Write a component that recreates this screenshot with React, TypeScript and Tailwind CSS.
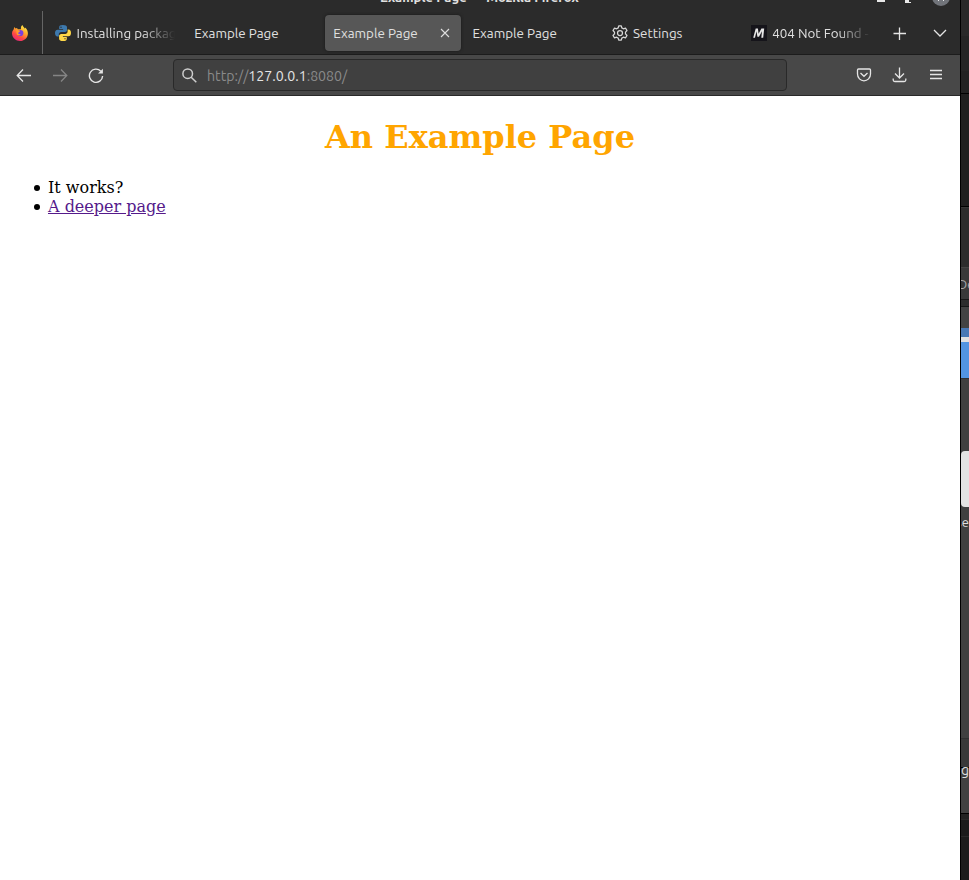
import type { ReactNode } from "react";

const uiFont = "font-['Ubuntu','Noto_Sans',sans-serif]";

function FirefoxIcon() {
  return (
    <svg width="16" height="16" viewBox="0 0 16 16">
      <defs>
        <linearGradient id="flame" x1="0.85" y1="0.05" x2="0.3" y2="1">
          <stop offset="0" stopColor="#fff04a" />
          <stop offset="0.4" stopColor="#ffa52b" />
          <stop offset="0.7" stopColor="#ff4a42" />
          <stop offset="1" stopColor="#e8267b" />
        </linearGradient>
      </defs>
      <path d="M1.6 4.4L2.3 2L3.5 3.6L5 2.9L5.8 4.2L9 4.2C8.6 2.2 9.4 .7 10.4 0C10.9 1.7 12.2 2.2 13 3.8L13.3 2.4C15.2 4.5 16 6.5 15.9 8.7C15.7 13 12.2 16 8 16S.2 12.8 0 8.5C0 6.8.6 5.6 1.6 4.4Z" fill="url(#flame)" />
      <circle cx="8.3" cy="8" r="3.1" fill="#7a3fe0" />
      <path d="M4.2 5.3C5.3 4.7 6.2 5.6 8.2 5.7C8.2 6.7 6.8 6.8 6.4 7.6C5.6 9 7.4 9.6 8.8 9C8.3 10.6 6 10.8 4.8 9.4Z" fill="#ff9b2c" />
    </svg>
  );
}

function PythonIcon() {
  return (
    <svg width="16" height="16" viewBox="0 0 16 16">
      <path d="M7.9 0C5 0 4.2 .8 4.2 2.3V4H8.1V4.7H2.6C.9 4.7 0 6 0 8C0 10 .9 11.4 2.4 11.4H3.8V9.4C3.8 8 5 7 6.3 7H10C11.2 7 12 6 12 5V2.3C12 .7 10.5 0 7.9 0Z" fill="#3d79ad" />
      <path d="M8.1 16C11 16 11.8 15.2 11.8 13.7V12H7.9V11.3H13.4C15.1 11.3 16 10 16 8C16 6 15.1 4.6 13.6 4.6H12.6V6.6C12.6 8 11.5 9 10.2 9H6.2C5 9 4.1 10 4.1 11V13.7C4.1 15.3 5.5 16 8.1 16Z" fill="#ffd848" />
      <circle cx="6" cy="2.2" r=".7" fill="#2b2b2b" />
      <circle cx="10" cy="13.8" r=".7" fill="#5a4d22" />
    </svg>
  );
}

function GearIcon() {
  return (
    <svg width="16" height="16" viewBox="0 0 16 16" fill="none" stroke="#d8d8d8" strokeWidth="1.25" strokeLinejoin="round">
      <path d="M6.7 .8H9.3L9.8 2.9L11.4 3.8L13.5 3.2L15 5.5L13.5 7.1V8.9L15 10.5L13.5 12.8L11.4 12.2L9.8 13.1L9.3 15.2H6.7L6.2 13.1L4.6 12.2L2.5 12.8L1 10.5L2.5 8.9V7.1L1 5.5L2.5 3.2L4.6 3.8L6.2 2.9Z" />
      <circle cx="8" cy="8" r="2.5" />
    </svg>
  );
}

function MdnIcon() {
  return (
    <svg width="16" height="16" viewBox="0 0 16 16">
      <rect width="16" height="16" fill="#15141a" />
      <path d="M4.7 3.5H6.9L7.6 8.8L10.4 3.5H13.2L12.2 12.7H10.3L11 6.2L8 11.8H6.4L5.5 6.2L4 12.7H2.2Z" fill="#e5e5e5" />
    </svg>
  );
}

function Tab({ icon, active, fade, children }: { icon?: ReactNode; active?: boolean; fade?: boolean; children: string }) {
  return (
    <div className={`flex h-9 w-[136px] shrink-0 items-center rounded px-2 ${active ? "bg-[#575757] shadow-[0_0_3px_#171717]" : ""}`}>
      {icon && <span className="mr-[5.5px] shrink-0">{icon}</span>}
      <span className={`flex-1 overflow-hidden pt-px text-[13.4px] leading-[21px] whitespace-nowrap ${fade ? "[mask-image:linear-gradient(to_right,#000_66%,transparent_100%)]" : ""}`}>
        {children}
      </span>
      {active && (
        <svg className="mr-[3px] shrink-0" width="10" height="10" viewBox="0 0 10 10" stroke="#dedede" strokeWidth="1.1">
          <path d="M1 1L9 9M9 1L1 9" />
        </svg>
      )}
    </div>
  );
}

function TabStrip() {
  return (
    <header className="relative h-[55px] overflow-hidden border-b border-[#1c1c1c] bg-[#2b2b2b] text-[#e0e0e0]">
      <div className="absolute top-[-12px] left-[380px] text-[13.2px] leading-[18px] font-bold whitespace-pre">Example Page — Mozilla Firefox</div>
      <svg className="absolute top-0 left-[870px]" width="90" height="7" viewBox="0 0 90 7">
        <path d="M7 0H15V2H7Z" fill="#e8e8e8" />
        <path d="M35 0H39V2H41V3H35Z" fill="#e8e8e8" />
        <circle cx="71" cy="-3" r="9" fill="#71747a" />
        <path d="M68.5 0V1M73.5 0V1" stroke="#e8e8e8" />
      </svg>
      <div className="flex h-full pt-[11px]">
        <div className="flex w-[43px] shrink-0 justify-center border-r border-[#656565] pt-[14px] pr-[2px]">
          <FirefoxIcon />
        </div>
        <div className="flex gap-[3.15px] pt-1 pl-1">
          <Tab icon={<PythonIcon />} fade>Installing packages</Tab>
          <Tab>Example Page</Tab>
          <Tab active>Example Page</Tab>
          <Tab>Example Page</Tab>
          <Tab icon={<GearIcon />}>Settings</Tab>
          <Tab icon={<MdnIcon />} fade>404 Not Found - MDN</Tab>
        </div>
        <div className="flex flex-1 items-start justify-between pt-4 pr-[13px] pl-[14px]">
          <svg width="14" height="14" viewBox="0 0 14 14" stroke="#e5e5e5" strokeWidth="1.3">
            <path d="M6.5 .5V13M0.5 6.5H13" />
          </svg>
          <svg width="14" height="12" viewBox="0 0 14 12" fill="none" stroke="#e5e5e5" strokeWidth="1.3">
            <path d="M1 3L7 9L13 3" />
          </svg>
        </div>
      </div>
    </header>
  );
}

function Toolbar() {
  return (
    <nav className="flex h-[41px] items-center border-b border-[#292929] bg-[#484848] pl-4">
      <div className="flex w-[157px] items-center gap-5 pt-px">
        <svg width="16" height="16" viewBox="0 0 16 16" fill="none" stroke="#e5e5e5" strokeWidth="1.3">
          <path d="M15 7.5H1.5M7 1.5L1.2 7.5L7 13.5" />
        </svg>
        <svg width="16" height="16" viewBox="0 0 16 16" fill="none" stroke="#858585" strokeWidth="1.3">
          <path d="M1 7.5H14.5M9 1.5L14.8 7.5L9 13.5" />
        </svg>
        <svg width="16" height="16" viewBox="0 0 16 16" fill="none" stroke="#e5e5e5" strokeWidth="1.4">
          <path d="M12.8 3.2A6.6 6.6 0 1 0 14.6 8" />
          <path d="M14.9 .8V5.6H10.1Z" fill="#e5e5e5" stroke="none" />
        </svg>
      </div>
      <div className="flex h-8 w-[614px] items-center rounded border border-[#292929] bg-[#404040] pl-2 text-[14.15px] text-[#8a8a8a]">
        <svg className="mr-[10px]" width="15" height="15" viewBox="0 0 15 15" fill="none" stroke="#cecece" strokeWidth="1.5">
          <circle cx="5.7" cy="5.7" r="4.8" />
          <path d="M9.2 9.2L14.3 14.3" />
        </svg>
        <span className="pt-[2px] leading-5">http://<span className="text-[#e5e5e5]">127.0.0.1</span>:8080/</span>
      </div>
      <div className="flex flex-1 items-center justify-between pr-4 pl-[69px]">
        <svg width="16" height="16" viewBox="0 0 16 16" fill="none" stroke="#e5e5e5" strokeWidth="1.3">
          <path d="M2.5 2H13.5Q14.5 2 14.5 3V7C14.5 11 11.5 13.8 8 13.8S1.5 11 1.5 7V3Q1.5 2 2.5 2Z" />
          <path d="M4.5 6L8 9.3L11.5 6" />
        </svg>
        <svg width="16" height="16" viewBox="0 0 16 16" fill="none" stroke="#e5e5e5" strokeWidth="1.3">
          <path d="M7.5 .5V11M3 6.5L7.5 11L12 6.5M1.2 11.5V13Q1.2 14.5 2.7 14.5H12.3Q13.8 14.5 13.8 13V11.5" />
        </svg>
        <svg width="16" height="16" viewBox="0 0 16 16" stroke="#e5e5e5" strokeWidth="1.3">
          <path d="M2 3.5H14M2 7.5H14M2 11.5H14" />
        </svg>
      </div>
    </nav>
  );
}

function BackgroundWindow() {
  return (
    <aside className="flex h-full w-[9px] shrink-0 flex-col overflow-hidden border-l border-black bg-[#1d1d1d] text-[13px] whitespace-nowrap text-[#dedede]">
      <div className="h-9 bg-[#292929]" />
      <div className="h-[35px] bg-[#252525]" />
      <div className="h-[22px] bg-[#222222]" />
      <div className="h-[114px] border-t border-b border-black bg-[#1f1f1f]" />
      <div className="h-[60px] border-t border-[#373737] bg-[#2c2c2c]" />
      <div className="h-8 border-t border-[#444444] bg-[#393939] pt-[6px] leading-5 text-[#a9a9a9]"><span className="-ml-[3px]">De</span></div>
      <div className="h-2 border-t border-b border-[#171717] bg-[#2d2d2d]" />
      <div className="h-[21px] bg-[#434343]" />
      <div className="h-[9px] bg-[#4878b4]" />
      <div className="h-[5px] bg-[#e1e1e1]" />
      <div className="h-9 bg-[#5294e2]" />
      <div className="h-[73px] border-t border-[#303030] bg-[#404040]" />
      <div className="h-14 bg-[#404040]"><div className="h-full rounded-l bg-[#e3e3e3]" /></div>
      <div className="h-[231px] bg-[#404040] pt-[5px] leading-5"><span className="-ml-[5px]">se</span></div>
      <div className="h-[29px] border-t border-[#303030] bg-[#393939]" />
      <div className="h-[47px] border-t border-b border-black bg-[#414141] text-[14px] leading-[4px]">g</div>
      <div className="h-[5px] bg-[#222222]" />
      <div className="h-[18px] border-t border-b border-[#292929] bg-[#1b1b1b]" />
      <div className="flex-1 bg-[#1c1c1c]" />
    </aside>
  );
}

function Bullet() {
  return <span className="mt-px mr-[8px] ml-[0.3px] size-[5.7px] rounded-full bg-black" />;
}

export default function App() {
  return (
    <div className={`flex h-[880px] w-[969px] overflow-hidden bg-white ${uiFont}`}>
      <div className="flex w-[960px] shrink-0 flex-col">
        <TabStrip />
        <Toolbar />
        <main className="flex-1 bg-white px-2 font-['DejaVu_Serif',serif] text-base text-black">
          <h1 className="pt-[22px] text-center text-[32px] leading-[38px] font-bold text-[#ffa500]">An Example Page</h1>
          <ul className="mt-[22px] pl-[26px] leading-[19px]">
            <li className="flex items-center"><Bullet />It works?</li>
            <li className="flex items-center"><Bullet /><a href="#deeper" className="text-[#551a8b] underline">A deeper page</a></li>
          </ul>
        </main>
      </div>
      <BackgroundWindow />
    </div>
  );
}
